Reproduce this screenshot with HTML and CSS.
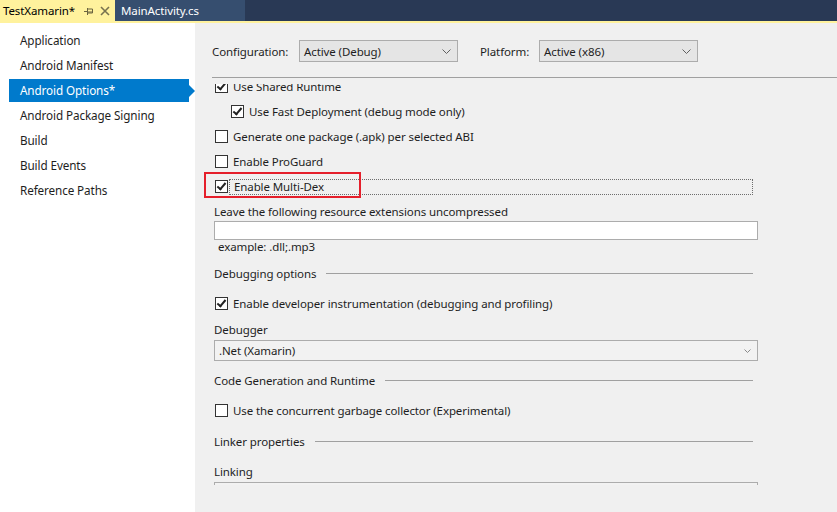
FILE: index.html
```html
<!DOCTYPE html>
<html lang="en">
<head>
    <meta charset="UTF-8">
    <title>TestXamarin - Android Options</title>
    <link rel="stylesheet" href="styles.css">
</head>
<body>
<div class="tabs">
    <div class="tab tab-active">
        <span>TestXamarin*</span>
        <svg class="pin" width="10" height="8" viewBox="0 0 10 8"><path d="M0 4.5h3M3.5 1v7M3.5 2h5v4h-5M3.5 5h5" stroke="#6b6440" fill="none" stroke-width="1"/></svg>
        <svg class="close" width="10" height="10" viewBox="0 0 10 10"><path d="M1 1l8 8M9 1l-8 8" stroke="#77724f" stroke-width="1.6"/></svg>
    </div>
    <div class="tab tab-doc">MainActivity.cs</div>
</div>
<div class="main">
    <ul class="side">
        <li>Application</li>
        <li>Android Manifest</li>
        <li class="selected">Android Options*</li>
        <li>Android Package Signing</li>
        <li>Build</li>
        <li>Build Events</li>
        <li>Reference Paths</li>
    </ul>
    <div class="pane">
        <div class="toolbar">
            <label class="conf-label">Configuration:</label>
            <div class="combo combo-config">Active (Debug)<svg width="9" height="5" viewBox="0 0 9 5"><path d="M0.5 0.5l4 4 4-4" stroke="#606060" fill="none"/></svg></div>
            <label class="plat-label">Platform:</label>
            <div class="combo combo-config">Active (x86)<svg width="9" height="5" viewBox="0 0 9 5"><path d="M0.5 0.5l4 4 4-4" stroke="#606060" fill="none"/></svg></div>
        </div>
        <div class="rule"></div>
        <div class="scroll">
            <div class="form">
                <div class="row"><span class="box on"></span><span class="text">Use Shared Runtime</span></div>
                <div class="row indent"><span class="box on"></span><span class="text">Use Fast Deployment (debug mode only)</span></div>
                <div class="row"><span class="box"></span><span class="text">Generate one package (.apk) per selected ABI</span></div>
                <div class="row"><span class="box"></span><span class="text">Enable ProGuard</span></div>
                <div class="row focus-row">
                    <span class="box on"></span><span class="text focused">Enable Multi-Dex</span>
                    <div class="mark"></div>
                </div>

                <div class="label first-label">Leave the following resource extensions uncompressed</div>
                <div class="input"></div>
                <div class="hint">example: .dll;.mp3</div>

                <div class="section sec-debug"><span>Debugging options</span><i></i></div>
                <div class="row sec-row"><span class="box on"></span><span class="text">Enable developer instrumentation (debugging and profiling)</span></div>
                <div class="label">Debugger</div>
                <div class="combo combo-wide">.Net (Xamarin)<svg width="7" height="4" viewBox="0 0 7 4"><path d="M0.5 0.5l3 3 3-3" stroke="#8a8a8a" fill="none"/></svg></div>

                <div class="section sec-code"><span>Code Generation and Runtime</span><i></i></div>
                <div class="row sec-row"><span class="box"></span><span class="text">Use the concurrent garbage collector (Experimental)</span></div>

                <div class="section sec-linker"><span>Linker properties</span><i></i></div>
                <div class="label linking">Linking</div>
                <div class="combo combo-wide"></div>
            </div>
        </div>
    </div>
</div>
</body>
</html>
```

FILE: styles.css
```css
body { margin: 0; font-family: "Noto Sans", "Open Sans", sans-serif; font-size: 11.5px; letter-spacing: -0.1px; color: #1e1e1e; background: #f0f0f0; width: 837px; height: 512px; overflow: hidden; }

/* document tabs */
.tabs { display: flex; height: 21px; background: #293955; border-bottom: 2px solid #fff29d; }
.tab { display: flex; align-items: center; height: 21px; padding: 0 0 0 3px; box-sizing: border-box; white-space: nowrap; font-size: 11.5px; }
.tab-active { width: 115px; background: #fff29d; color: #000; }
.tab-active .pin { margin-left: 9px; }
.tab-active .close { margin-left: 6px; }
.tab-doc { width: 130px; padding-left: 6px; background: #364e6f; color: #fff; }

.main { display: flex; height: 489px; }

/* left navigation */
.side { list-style: none; margin: 0; padding: 6px 0 0 0; width: 195px; background: #fff; box-sizing: border-box; font-size: 11.7px; }
.side li { position: relative; height: 23px; line-height: 23px; margin: 0 6px 2px 9px; padding-left: 11px; }
.side li.selected { background: #007acc; color: #fff; }
.side li.selected::after { content: ""; position: absolute; right: -6px; top: 6px; border-left: 6px solid #007acc; border-top: 6px solid transparent; border-bottom: 6px solid transparent; }

/* right pane */
.pane { flex: 1; display: flex; flex-direction: column; min-width: 0; }
.toolbar { display: flex; align-items: center; padding: 17px 0 0 17px; height: 22px; }
.conf-label { width: 87px; }
.plat-label { width: 59px; margin-left: 22px; }
.rule { height: 1px; background: #a0a0a0; margin: 15px 0 0 17px; }

.combo { display: flex; align-items: center; justify-content: space-between; box-sizing: border-box; border: 1px solid #acacac; padding: 0 5px 0 4px; }
.combo-config { width: 159px; height: 22px; background: #e5e5e5; padding-right: 6px; }
.combo-wide { height: 21px; background: #f2f2f2; padding-right: 6px; }

.scroll { margin-top: 6px; height: 401px; overflow: hidden; }
.form { margin-top: -10px; padding: 0 79px 0 19px; }

.row { position: relative; display: flex; align-items: center; height: 25px; padding-left: 1px; }
.row.indent { padding-left: 17px; }
.box { width: 13px; height: 13px; box-sizing: border-box; border: 1px solid #333; background: #fff; flex: none; position: relative; }
.box.on::after { content: ""; position: absolute; left: 3px; top: 0px; width: 3px; height: 7px; border: solid #222; border-width: 0 2px 2px 0; transform: rotate(40deg); }
.text { margin-left: 5px; }
.text.focused { flex: 1; margin: 0 5px 0 1px; padding-left: 4px; height: 16px; line-height: 14px; box-sizing: border-box; border: 1px dotted #6d6d6d; }
.mark { position: absolute; left: -10px; top: -2px; width: 157px; height: 26px; box-sizing: border-box; border: 2px solid #e51f2b; }

.label { height: 18px; line-height: 18px; }
.first-label { margin-top: 4px; }
.input { height: 19px; box-sizing: border-box; border: 1px solid #acacac; background: #fff; }
.hint { height: 14px; line-height: 14px; padding-left: 4px; }

.section { display: flex; align-items: center; height: 20px; margin-right: 5px; }
.section i { flex: 1; height: 1px; background: #a0a0a0; margin-left: 10px; }
.sec-debug { margin-top: 9px; }
.sec-code { margin-top: 9px; }
.sec-linker { margin-top: 8px; }
.sec-row { margin-top: 8px; }
.sec-row + .label { margin-top: 5px; }
.label + .combo-wide { margin-top: 1px; }
.linking { margin-top: 12px; }
```
